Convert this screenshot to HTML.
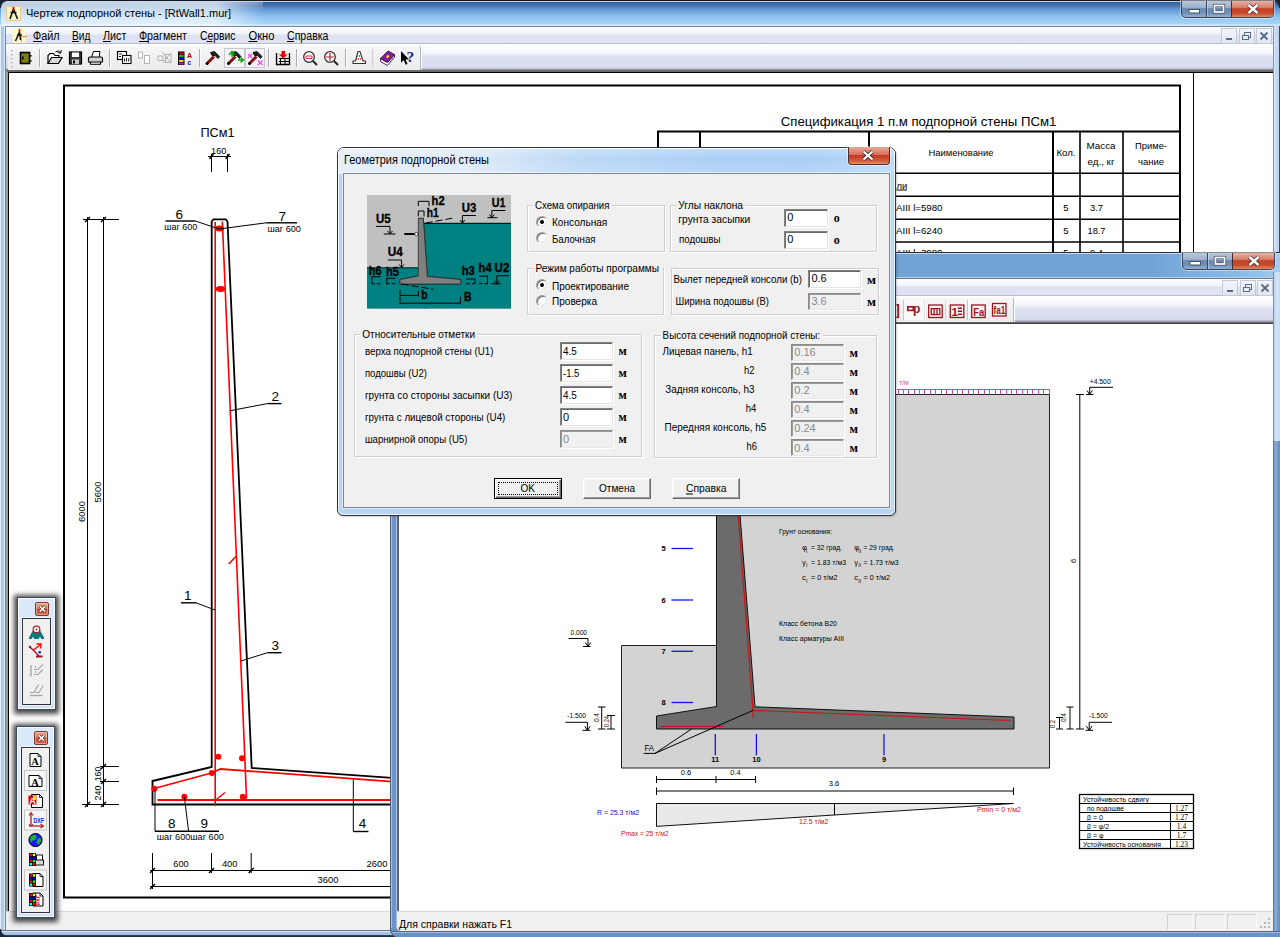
<!DOCTYPE html>
<html lang="ru"><head><meta charset="utf-8"><title>Чертеж подпорной стены</title><style>
html,body{margin:0;padding:0;background:#fff;}
body{width:1280px;height:937px;overflow:hidden;position:relative;font-family:"Liberation Sans",sans-serif;font-size:12px;color:#000;}
#root{position:absolute;left:0;top:0;width:1280px;height:937px;overflow:hidden;}
#root div{position:absolute;box-sizing:border-box;}
svg.L{position:absolute;left:0;top:0;overflow:hidden;}
svg text{font-family:"Liberation Sans",sans-serif;white-space:pre;}
</style></head><body><div id="root">
<div style="left:0px;top:0px;width:1280px;height:937px;background:#b4cfee;"></div>
<div style="left:0px;top:0px;width:1280px;height:27px;background:linear-gradient(to bottom,#15181f 0,#15181f 1px,#c5d6ee 1px,#c5d6ee 2px,#2b5a9c 2px,#3b69a6 3px,#4470a8 5.5px,#4a7cba 6.5px,#5e92cf 8.5px,#66a0db 10.5px,#7ab0e4 13.5px,#8cc0ef 16.5px,#9ccdf5 20.5px,#a4d3f8 23.5px,#c5e5fb 24px,#c5e5fb 26px,#6b7680 26px);"></div>
<div style="left:1px;top:2px;width:262px;height:24px;background:linear-gradient(to right,rgba(255,255,255,.62) 0,rgba(255,255,255,.66) 215px,rgba(255,255,255,0) 262px);"></div>
<div style="left:1px;top:2px;width:262px;height:8px;background:linear-gradient(to bottom,rgba(225,235,248,.35),rgba(255,255,255,0));"></div>
<div style="left:0px;top:26px;width:6px;height:911px;background:linear-gradient(to right,#e4eefa 0,#e4eefa 1px,#a9c5e7 1px,#b3ceee 4px,#d3e5f8 4px,#d3e5f8 5px,#80858e 5px);"></div>
<div style="left:1273px;top:26px;width:7px;height:911px;background:linear-gradient(to right,#8e959f 0,#8e959f 1px,#d6e6f8 1px,#c4d9f2 3px,#bdd4f0 6px,#39485c 6px);"></div>
<div style="left:0px;top:930px;width:1280px;height:7px;background:linear-gradient(to bottom,#6f7780 0,#6f7780 1px,#d3e5f8 1px,#d3e5f8 2px,#a9c6e9 2px,#9fbee4 5px,#3b4a5e 5px,#1d2733 7px);"></div>
<div style="left:0px;top:0px;width:8px;height:8px;background:radial-gradient(circle at 8px 8px,rgba(0,0,0,0) 6.5px,#1c2633 7.5px);"></div>
<div style="left:1272px;top:0px;width:8px;height:8px;background:radial-gradient(circle at 0px 8px,rgba(0,0,0,0) 6.5px,#1c2633 7.5px);"></div>
<div style="left:0px;top:929px;width:8px;height:8px;background:radial-gradient(circle at 8px 0px,rgba(0,0,0,0) 6.5px,#1c2633 7.5px);"></div>
<div style="left:6px;top:26px;width:1267px;height:19px;background:linear-gradient(to bottom,#7f868f 0,#7f868f 1px,#fcfdff 1px,#f1f3fb 8px,#dde1f1 9px,#dfe3f3 17px,#b9bcc8 17px,#b9bcc8 18px,#fff 18px);"></div>
<div style="left:6px;top:45px;width:1267px;height:26px;background:linear-gradient(to bottom,#ffffff 0,#f3f5fc 8px,#dde1f1 12px,#d6dbed 23px,#9b9ea8 24px,#9b9ea8 25px,#696969 25px);"></div>
<div style="left:8px;top:46px;width:413px;height:24px;background:linear-gradient(to bottom,#f7f7f9 0,#f0f0f2 50%,#ececef 100%);border-right:1px solid #b4b6c0;border-radius:0 2px 2px 0;box-shadow:1px 0 0 #fff;"></div>
<div style="left:6px;top:71px;width:1267px;height:840px;background:#fff;border-left:2px solid #9b9b9b;border-top:1px solid #696969;"></div>
<div style="left:8px;top:72px;width:1265px;height:839px;background:#fff;border-left:1px solid #000;border-top:1px solid #000;"></div>
<div style="left:6px;top:911px;width:1267px;height:19px;background:#f0f0f0;border-top:1px solid #d9d9d9;"></div>
<div style="left:1181px;top:1px;width:93px;height:17px;border:1px solid #3a4658;border-top:none;border-radius:0 0 5px 5px;background:linear-gradient(to bottom,#b9c8dc 0,#9db1cc 40%,#6c88ad 48%,#7190b8 75%,#8fb0d6 100%);box-shadow:0 0 0 1px rgba(255,255,255,.45);"></div><div style="left:1231px;top:1px;width:42px;height:16px;border-radius:0 0 4px 0;background:linear-gradient(to bottom,#e8b0a4 0,#d7806c 40%,#c2442a 48%,#c8482c 75%,#e08a5a 100%);border-left:1px solid #4a2a28;"></div><div style="left:1206px;top:1px;width:1px;height:16px;background:#3a4658;"></div><div style="left:1207px;top:1px;width:1px;height:16px;background:rgba(255,255,255,.35);"></div>
<svg class="L" width="1280" height="937" viewBox="0 0 1280 937"><rect x="1189" y="9.5" width="10.5" height="3.5" fill="#fff" stroke="#45546a" stroke-width="1"/><rect x="1214.5" y="5.5" width="9" height="6.5" fill="none" stroke="#45546a" stroke-width="3.2"/><rect x="1214.5" y="5.5" width="9" height="6.5" fill="none" stroke="#fff" stroke-width="1.7"/><path d="M1248.5 5 L1257.5 13 M1257.5 5 L1248.5 13" stroke="#4a3030" stroke-width="4.2" fill="none"/><path d="M1248.5 5 L1257.5 13 M1257.5 5 L1248.5 13" stroke="#fff" stroke-width="2.4" fill="none"/><text x="26" y="17" font-size="11.2" fill="#000" textLength="205" lengthAdjust="spacingAndGlyphs">Чертеж подпорной стены - [RtWall1.mur]</text><text x="33" y="39.7" font-size="12" fill="#000" textLength="26.5" lengthAdjust="spacingAndGlyphs">Файл</text><text x="72" y="39.7" font-size="12" fill="#000" textLength="18.3" lengthAdjust="spacingAndGlyphs">Вид</text><text x="103" y="39.7" font-size="12" fill="#000" textLength="23.3" lengthAdjust="spacingAndGlyphs">Лист</text><text x="139" y="39.7" font-size="12" fill="#000" textLength="48" lengthAdjust="spacingAndGlyphs">Фрагмент</text><text x="200" y="39.7" font-size="12" fill="#000" textLength="35.5" lengthAdjust="spacingAndGlyphs">Сервис</text><text x="248.5" y="39.7" font-size="12" fill="#000" textLength="26" lengthAdjust="spacingAndGlyphs">Окно</text><text x="287" y="39.7" font-size="12" fill="#000" textLength="41.5" lengthAdjust="spacingAndGlyphs">Справка</text><line x1="33" y1="41.5" x2="42" y2="41.5" stroke="#000" stroke-width="1"/><line x1="72" y1="41.5" x2="79" y2="41.5" stroke="#000" stroke-width="1"/><line x1="103" y1="41.5" x2="111" y2="41.5" stroke="#000" stroke-width="1"/><line x1="139" y1="41.5" x2="148" y2="41.5" stroke="#000" stroke-width="1"/><line x1="206.5" y1="41.5" x2="212.5" y2="41.5" stroke="#000" stroke-width="1"/><line x1="248.5" y1="41.5" x2="257.5" y2="41.5" stroke="#000" stroke-width="1"/><line x1="287" y1="41.5" x2="294" y2="41.5" stroke="#000" stroke-width="1"/></svg>
<div style="left:1221.0px;top:28px;width:16px;height:16px;border:1px solid #c3c9d6;background:linear-gradient(to bottom,#f2f5fb,#e0e7f3);"></div><div style="left:1238.5px;top:28px;width:16px;height:16px;border:1px solid #c3c9d6;background:linear-gradient(to bottom,#f2f5fb,#e0e7f3);"></div><div style="left:1256.0px;top:28px;width:16px;height:16px;border:1px solid #c3c9d6;background:linear-gradient(to bottom,#f2f5fb,#e0e7f3);"></div>
<svg class="L" width="1280" height="937" viewBox="0 0 1280 937"><line x1="1226" y1="39" x2="1232" y2="39" stroke="#5a6a80" stroke-width="2"/><rect x="1244.5" y="32.5" width="6" height="5" fill="none" stroke="#5a6a80" stroke-width="1"/><rect x="1242.5" y="35.5" width="6" height="4" fill="#e8edf6" stroke="#5a6a80" stroke-width="1"/><path d="M1260.5 32.5 L1267.5 39.5 M1267.5 32.5 L1260.5 39.5" stroke="#5a6a80" stroke-width="1.8"/></svg>
<svg class="L" width="1280" height="937" viewBox="0 0 1280 937"><line x1="1193.5" y1="73" x2="1193.5" y2="911" stroke="#000" stroke-width="1"/><rect x="64" y="85.5" width="1116" height="812" fill="none" stroke="#000" stroke-width="2"/><text x="200.5" y="137" font-size="13.5" fill="#000" textLength="34" lengthAdjust="spacingAndGlyphs">ПСм1</text><text x="211" y="153.5" font-size="9.5" fill="#000" textLength="15.5" lengthAdjust="spacingAndGlyphs">160</text><line x1="208" y1="156.5" x2="231" y2="156.5" stroke="#000" stroke-width="1"/><line x1="211.5" y1="154" x2="211.5" y2="172" stroke="#000" stroke-width="1"/><line x1="227.5" y1="154" x2="227.5" y2="172" stroke="#000" stroke-width="1"/><line x1="209.5" y1="159" x2="213.5" y2="154" stroke="#000" stroke-width="1.3"/><line x1="225.5" y1="159" x2="229.5" y2="154" stroke="#000" stroke-width="1.3"/><line x1="87.5" y1="217" x2="87.5" y2="807" stroke="#000" stroke-width="1"/><line x1="103.5" y1="217" x2="103.5" y2="807" stroke="#000" stroke-width="1"/><line x1="83" y1="219.5" x2="119" y2="219.5" stroke="#000" stroke-width="1"/><line x1="100" y1="766.5" x2="119" y2="766.5" stroke="#000" stroke-width="1"/><line x1="100" y1="781.5" x2="119" y2="781.5" stroke="#000" stroke-width="1"/><line x1="82" y1="804.5" x2="119" y2="804.5" stroke="#000" stroke-width="1"/><line x1="85.0" y1="222.0" x2="90.0" y2="217.0" stroke="#000" stroke-width="1.5"/><line x1="101.0" y1="222.0" x2="106.0" y2="217.0" stroke="#000" stroke-width="1.5"/><line x1="101.0" y1="769.0" x2="106.0" y2="764.0" stroke="#000" stroke-width="1.5"/><line x1="101.0" y1="784.0" x2="106.0" y2="779.0" stroke="#000" stroke-width="1.5"/><line x1="85.0" y1="807.0" x2="90.0" y2="802.0" stroke="#000" stroke-width="1.5"/><line x1="101.0" y1="807.0" x2="106.0" y2="802.0" stroke="#000" stroke-width="1.5"/><text x="85" y="511.5" font-size="9.5" fill="#000" textLength="21" lengthAdjust="spacingAndGlyphs" text-anchor="middle" transform="rotate(-90 85 511.5)">6000</text><text x="101" y="492" font-size="9.5" fill="#000" textLength="21" lengthAdjust="spacingAndGlyphs" text-anchor="middle" transform="rotate(-90 101 492)">5600</text><text x="101" y="774" font-size="9.5" fill="#000" textLength="14.5" lengthAdjust="spacingAndGlyphs" text-anchor="middle" transform="rotate(-90 101 774)">160</text><text x="101" y="793" font-size="9.5" fill="#000" textLength="15" lengthAdjust="spacingAndGlyphs" text-anchor="middle" transform="rotate(-90 101 793)">240</text><polyline points="152.5,781 211.7,767 211.7,221.5 213.5,219.3 225.7,219.3 227.5,221.5 251.7,768 392,777.8" fill="none" stroke="#000" stroke-width="1.8"/><polyline points="152.5,780 152.5,804.5 392,804.5" fill="none" stroke="#000" stroke-width="1.8"/><line x1="215.2" y1="222" x2="215.2" y2="806" stroke="#f00" stroke-width="1.6"/><polyline points="222.3,221.5 222.8,232 246.5,798" fill="none" stroke="#f00" stroke-width="1.6"/><polyline points="154,788.5 211.5,773 220.5,769 392,781.6" fill="none" stroke="#f00" stroke-width="1.8"/><line x1="157.5" y1="800" x2="392" y2="800" stroke="#f00" stroke-width="1.8"/><line x1="215" y1="800.5" x2="225" y2="792.5" stroke="#f00" stroke-width="1.5"/><line x1="246.5" y1="798" x2="240" y2="800" stroke="#f00" stroke-width="1.5"/><line x1="228.7" y1="564" x2="236.4" y2="556" stroke="#f00" stroke-width="1.5"/><ellipse cx="219.5" cy="228.5" rx="4.6" ry="3" fill="#f00"/><ellipse cx="220.5" cy="289" rx="4.8" ry="3" fill="#f00"/><circle cx="218.3" cy="756.7" r="3" fill="#f00"/><circle cx="242" cy="758.3" r="3" fill="#f00"/><circle cx="211.8" cy="773" r="3" fill="#f00"/><circle cx="154.3" cy="788.7" r="3" fill="#f00"/><circle cx="184.4" cy="796.8" r="3" fill="#f00"/><circle cx="242.8" cy="796.8" r="3" fill="#f00"/><text x="175.5" y="218.7" font-size="13.5" fill="#000">6</text><line x1="165.5" y1="221" x2="195.5" y2="221" stroke="#000" stroke-width="1.4"/><line x1="195.5" y1="221" x2="219" y2="229" stroke="#000" stroke-width="1"/><text x="164.3" y="230" font-size="9.5" fill="#000" textLength="33" lengthAdjust="spacingAndGlyphs">шаг 600</text><text x="278.5" y="220.5" font-size="13.5" fill="#000">7</text><line x1="266.3" y1="222.8" x2="297" y2="222.8" stroke="#000" stroke-width="1.4"/><line x1="266.3" y1="222.8" x2="219" y2="229" stroke="#000" stroke-width="1"/><text x="267.4" y="231.7" font-size="9.5" fill="#000" textLength="33.5" lengthAdjust="spacingAndGlyphs">шаг 600</text><text x="271.5" y="401" font-size="13.5" fill="#000">2</text><line x1="267.4" y1="403.6" x2="281.5" y2="403.6" stroke="#000" stroke-width="1.4"/><line x1="267.4" y1="403.6" x2="229.6" y2="410.8" stroke="#000" stroke-width="1"/><text x="271.5" y="650" font-size="13.5" fill="#000">3</text><line x1="267.4" y1="652.7" x2="281.5" y2="652.7" stroke="#000" stroke-width="1.4"/><line x1="267.4" y1="652.7" x2="241" y2="661" stroke="#000" stroke-width="1"/><text x="184" y="599.5" font-size="13.5" fill="#000">1</text><line x1="181" y1="602.8" x2="196" y2="602.8" stroke="#000" stroke-width="1.4"/><line x1="196" y1="602.8" x2="215" y2="610" stroke="#000" stroke-width="1"/><text x="358.7" y="828" font-size="13.5" fill="#000">4</text><line x1="353.3" y1="831.5" x2="368.4" y2="831.5" stroke="#000" stroke-width="1.4"/><line x1="353.3" y1="831.5" x2="353.3" y2="779.5" stroke="#000" stroke-width="1"/><text x="168" y="828" font-size="13.5" fill="#000">8</text><text x="200.5" y="828" font-size="13.5" fill="#000">9</text><line x1="155" y1="831.3" x2="219" y2="831.3" stroke="#000" stroke-width="1.4"/><line x1="155" y1="831.3" x2="155" y2="790" stroke="#000" stroke-width="1"/><line x1="188.6" y1="831.3" x2="184.4" y2="797" stroke="#000" stroke-width="1"/><text x="156.8" y="840.4" font-size="9.5" fill="#000" textLength="67" lengthAdjust="spacingAndGlyphs">шаг 600шаг 600</text><line x1="150" y1="870.5" x2="392" y2="870.5" stroke="#000" stroke-width="1"/><line x1="150" y1="886.5" x2="392" y2="886.5" stroke="#000" stroke-width="1"/><line x1="152.5" y1="853" x2="152.5" y2="889" stroke="#000" stroke-width="1"/><line x1="211.5" y1="853" x2="211.5" y2="873" stroke="#000" stroke-width="1"/><line x1="251.2" y1="853" x2="251.2" y2="873" stroke="#000" stroke-width="1"/><line x1="150.0" y1="873.0" x2="155.0" y2="868.0" stroke="#000" stroke-width="1.5"/><line x1="209.0" y1="873.0" x2="214.0" y2="868.0" stroke="#000" stroke-width="1.5"/><line x1="248.7" y1="873.0" x2="253.7" y2="868.0" stroke="#000" stroke-width="1.5"/><line x1="150.0" y1="889.0" x2="155.0" y2="884.0" stroke="#000" stroke-width="1.5"/><text x="181" y="866.7" font-size="9.5" fill="#000" textLength="15.5" lengthAdjust="spacingAndGlyphs" text-anchor="middle">600</text><text x="229.7" y="866.7" font-size="9.5" fill="#000" textLength="15.5" lengthAdjust="spacingAndGlyphs" text-anchor="middle">400</text><text x="377" y="866.7" font-size="9.5" fill="#000" textLength="21" lengthAdjust="spacingAndGlyphs" text-anchor="middle">2600</text><text x="328" y="883" font-size="9.5" fill="#000" textLength="21" lengthAdjust="spacingAndGlyphs" text-anchor="middle">3600</text><text x="780.8" y="125.8" font-size="13.5" fill="#000" textLength="275.5" lengthAdjust="spacingAndGlyphs">Спецификация 1 п.м подпорной стены ПСм1</text><line x1="657" y1="131.5" x2="1180" y2="131.5" stroke="#000" stroke-width="2"/><line x1="658" y1="131" x2="658" y2="252" stroke="#000" stroke-width="2"/><line x1="700" y1="131" x2="700" y2="252" stroke="#000" stroke-width="2"/><line x1="869" y1="131" x2="869" y2="252" stroke="#000" stroke-width="2"/><line x1="1053" y1="131" x2="1053" y2="252" stroke="#000" stroke-width="2"/><line x1="1080" y1="131" x2="1080" y2="252" stroke="#000" stroke-width="1.6"/><line x1="1123" y1="131" x2="1123" y2="252" stroke="#000" stroke-width="1.6"/><line x1="657" y1="173.2" x2="1180" y2="173.2" stroke="#000" stroke-width="1.6"/><line x1="657" y1="196.2" x2="1180" y2="196.2" stroke="#000" stroke-width="1.6"/><line x1="657" y1="219.2" x2="1180" y2="219.2" stroke="#000" stroke-width="1.6"/><line x1="657" y1="242" x2="1180" y2="242" stroke="#000" stroke-width="1.6"/><text x="961" y="156" font-size="9.5" fill="#000" textLength="65" lengthAdjust="spacingAndGlyphs" text-anchor="middle">Наименование</text><text x="1066" y="156" font-size="9.5" fill="#000" textLength="19" lengthAdjust="spacingAndGlyphs" text-anchor="middle">Кол.</text><text x="1101" y="148.5" font-size="9.5" fill="#000" textLength="29" lengthAdjust="spacingAndGlyphs" text-anchor="middle">Масса</text><text x="1101" y="165" font-size="9.5" fill="#000" textLength="27" lengthAdjust="spacingAndGlyphs" text-anchor="middle">ед., кг</text><text x="1151" y="148.5" font-size="9.5" fill="#000" textLength="32" lengthAdjust="spacingAndGlyphs" text-anchor="middle">Приме-</text><text x="1151" y="165" font-size="9.5" fill="#000" textLength="26" lengthAdjust="spacingAndGlyphs" text-anchor="middle">чание</text><text x="896.5" y="188.5" font-size="9.5" fill="#000">ли</text><line x1="896.5" y1="190" x2="907" y2="190" stroke="#000" stroke-width="1"/><text x="896" y="211" font-size="9.5" fill="#000" textLength="46.5" lengthAdjust="spacingAndGlyphs">AIII l=5980</text><text x="1066" y="211" font-size="9.5" fill="#000" text-anchor="middle">5</text><text x="1090" y="211" font-size="9.5" fill="#000" textLength="13" lengthAdjust="spacingAndGlyphs">3.7</text><text x="896" y="233.5" font-size="9.5" fill="#000" textLength="46.5" lengthAdjust="spacingAndGlyphs">AIII l=6240</text><text x="1066" y="233.5" font-size="9.5" fill="#000" text-anchor="middle">5</text><text x="1087.5" y="233.5" font-size="9.5" fill="#000" textLength="18" lengthAdjust="spacingAndGlyphs">18.7</text><text x="896" y="256" font-size="9.5" fill="#000" textLength="46.5" lengthAdjust="spacingAndGlyphs">AIII l=3980</text><text x="1066" y="256" font-size="9.5" fill="#000" text-anchor="middle">5</text><text x="1090" y="256" font-size="9.5" fill="#000" textLength="13" lengthAdjust="spacingAndGlyphs">9.4</text></svg>
<svg class="L" width="1280" height="937" viewBox="0 0 1280 937"><rect x="11" y="50" width="2" height="2" fill="#b9bdc9"/><rect x="12" y="51" width="1" height="1" fill="#fff"/><rect x="11" y="54" width="2" height="2" fill="#b9bdc9"/><rect x="12" y="55" width="1" height="1" fill="#fff"/><rect x="11" y="58" width="2" height="2" fill="#b9bdc9"/><rect x="12" y="59" width="1" height="1" fill="#fff"/><rect x="11" y="62" width="2" height="2" fill="#b9bdc9"/><rect x="12" y="63" width="1" height="1" fill="#fff"/><rect x="11" y="66" width="2" height="2" fill="#b9bdc9"/><rect x="12" y="67" width="1" height="1" fill="#fff"/><line x1="39.5" y1="49" x2="39.5" y2="67" stroke="#a9adb8" stroke-width="1"/><line x1="40.5" y1="49" x2="40.5" y2="67" stroke="#fff" stroke-width="1"/><line x1="109.5" y1="49" x2="109.5" y2="67" stroke="#a9adb8" stroke-width="1"/><line x1="110.5" y1="49" x2="110.5" y2="67" stroke="#fff" stroke-width="1"/><line x1="199.5" y1="49" x2="199.5" y2="67" stroke="#a9adb8" stroke-width="1"/><line x1="200.5" y1="49" x2="200.5" y2="67" stroke="#fff" stroke-width="1"/><line x1="268.5" y1="49" x2="268.5" y2="67" stroke="#a9adb8" stroke-width="1"/><line x1="269.5" y1="49" x2="269.5" y2="67" stroke="#fff" stroke-width="1"/><line x1="296.5" y1="49" x2="296.5" y2="67" stroke="#a9adb8" stroke-width="1"/><line x1="297.5" y1="49" x2="297.5" y2="67" stroke="#fff" stroke-width="1"/><line x1="345.5" y1="49" x2="345.5" y2="67" stroke="#a9adb8" stroke-width="1"/><line x1="346.5" y1="49" x2="346.5" y2="67" stroke="#fff" stroke-width="1"/><line x1="373" y1="49" x2="373" y2="67" stroke="#a9adb8" stroke-width="1"/><line x1="374" y1="49" x2="374" y2="67" stroke="#fff" stroke-width="1"/><rect x="20.5" y="52.5" width="9" height="11" fill="#7c7c10" stroke="#000" stroke-width="1.6"/><rect x="29" y="55" width="2.5" height="1.6" fill="#000"/><rect x="29" y="60" width="2.5" height="1.6" fill="#000"/><rect x="22" y="56.5" width="1.5" height="3" fill="#000"/><path d="M48 63.5 L48 55.5 L50 53.5 L53.5 53.5 L55 55.5 L59 55.5 L59 57.5" fill="#fff" stroke="#000" stroke-width="1.2"/><path d="M48 63.5 L51.5 57.5 L62 57.5 L58.5 63.5 Z" fill="#d8d8d8" stroke="#000" stroke-width="1.2"/><path d="M55.5 52 Q58.5 49.5 60.5 52.5 M61.3 50 L60.7 53.2 L57.8 52.6" fill="none" stroke="#000" stroke-width="1"/><rect x="69.5" y="52" width="12" height="12" fill="#3a3a3a" stroke="#000" stroke-width="1.2"/><rect x="72" y="52.5" width="7" height="4.5" fill="#fff"/><rect x="72" y="59.5" width="7" height="4.5" fill="#c8c8c8"/><rect x="73" y="60.5" width="2" height="3" fill="#000"/><path d="M91.5 57.5 L93.5 51.5 L100 51.5 L99 57.5 Z" fill="#fff" stroke="#000" stroke-width="1"/><rect x="88.5" y="57" width="14" height="5.5" rx="1.5" fill="#d0d0d0" stroke="#000" stroke-width="1.2"/><rect x="90.5" y="62" width="10" height="2.3" fill="#f4f4f4" stroke="#000" stroke-width="1"/><rect x="117.5" y="51.5" width="9" height="8" fill="#fff" stroke="#000" stroke-width="1.1"/><rect x="122.5" y="55.5" width="8.5" height="8" fill="#fff" stroke="#000" stroke-width="1.1"/><path d="M119 54 L122 54 M119 56.5 L121 56.5 M124.5 61.5 L124.5 58.5 M126.5 61.5 L126.5 58 M128.5 61.5 L129 58" stroke="#000" stroke-width="0.9"/><rect x="138.5" y="52" width="4" height="6" fill="#fff" stroke="#b4b4b4" stroke-width="1"/><rect x="144.5" y="55.5" width="5" height="8" fill="#fff" stroke="#b4b4b4" stroke-width="1"/><rect x="158" y="56" width="5" height="4.5" fill="none" stroke="#b4b4b4" stroke-width="1"/><rect x="165.5" y="54.5" width="5.5" height="8" fill="none" stroke="#b4b4b4" stroke-width="1"/><path d="M162.5 52 L171 63 M171 52.5 L163 63" stroke="#b4b4b4" stroke-width="1"/><rect x="178" y="51.5" width="6.5" height="13.5" fill="#000"/><rect x="179" y="52.5" width="4.5" height="2" fill="#e00000"/><rect x="179" y="55.0" width="4.5" height="2" fill="#00c800"/><rect x="179" y="57.5" width="4.5" height="2" fill="#1414ff"/><rect x="179" y="60.0" width="4.5" height="2" fill="#e0e000"/><rect x="179" y="62.5" width="4.5" height="2" fill="#e000e0"/><text x="187" y="58" font-size="7" fill="#b00000" font-weight="bold">A</text><text x="187.3" y="64.5" font-size="7" fill="#1414c0" font-weight="bold">c</text><path d="M207 63.5 L214 56.5" stroke="#8a1010" stroke-width="3"/><path d="M207 63.5 L214 56.5" stroke="#000" stroke-width="3" stroke-dasharray="0.01 20" stroke-linecap="round"/><path d="M210.5 52.5 L214.5 51.5 L219.5 56.5 L218 58.5 L215 55.5 L212 55.5 Z" fill="#222" stroke="#000" stroke-width="0.8"/><rect x="224.5" y="48.5" width="20" height="19" fill="#f4f4f6" stroke="#c6c8d0" stroke-width="1"/><path d="M228.5 63.5 L235.5 56.5" stroke="#8a1010" stroke-width="3"/><path d="M228.5 63.5 L235.5 56.5" stroke="#000" stroke-width="3" stroke-dasharray="0.01 20" stroke-linecap="round"/><path d="M232.0 52.5 L236.0 51.5 L241.0 56.5 L239.5 58.5 L236.5 55.5 L233.5 55.5 Z" fill="#222" stroke="#000" stroke-width="0.8"/><path d="M229 55 L232 51.5 L235 55 M232 51.5 L232 57 M238 60 L243.5 60 M240.5 57.5 L243.5 60 L240.5 62.5" fill="none" stroke="#10a010" stroke-width="1.5"/><rect x="245.5" y="48.5" width="19" height="19" fill="#f4f4f6" stroke="#c6c8d0" stroke-width="1"/><path d="M249.5 63.5 L256.5 56.5" stroke="#8a1010" stroke-width="3"/><path d="M249.5 63.5 L256.5 56.5" stroke="#000" stroke-width="3" stroke-dasharray="0.01 20" stroke-linecap="round"/><path d="M253.0 52.5 L257.0 51.5 L262.0 56.5 L260.5 58.5 L257.5 55.5 L254.5 55.5 Z" fill="#222" stroke="#000" stroke-width="0.8"/><path d="M248 54 L252 58 M252 54 L248 58 M258 60.5 L262.5 65 M262.5 60.5 L258 65" fill="none" stroke="#f040f0" stroke-width="1.1"/><path d="M276.5 53 L276.5 64.5 L289.5 64.5 L289.5 53" fill="#e4e4e4" stroke="#000" stroke-width="1.3"/><path d="M279 58.5 L289 58.5 M279 61.5 L289 61.5 M280.5 58.5 L280.5 64.5 M285 58.5 L285 64.5" stroke="#000" stroke-width="1"/><path d="M281.5 51 L285 51 L285 54.5 L287.5 54.5 L283.2 58.5 L279 54.5 L281.5 54.5 Z" fill="#e80000"/><circle cx="309" cy="57" r="5.3" fill="#fff" stroke="#333" stroke-width="1.3"/><path d="M313 61 L317 65" stroke="#222" stroke-width="2"/><path d="M306 56 L312 56 L312 58.5 L306 58.5 Z" fill="none" stroke="#c02020" stroke-width="0.9"/><circle cx="330" cy="57" r="5.3" fill="#fff" stroke="#333" stroke-width="1.3"/><path d="M334 61 L338 65" stroke="#222" stroke-width="2"/><path d="M326 57 L334 57 M330 53 L330 61" stroke="#c02020" stroke-width="1.2"/><path d="M358 51.5 L360 51.5 L363 61 L365.5 61 L365.5 63.5 L353 63.5 L353 61 L355.5 61 Z" fill="#fff" stroke="#333" stroke-width="1.1"/><path d="M357 56 L361 56 M356 59 L362.5 59" stroke="#d02020" stroke-width="1.3" stroke-dasharray="1 1"/><path d="M380.5 58.5 L380.5 61.5 L387.5 65.5 L394.5 57 L394.5 54.5 L387.5 62.5 Z" fill="#fff" stroke="#3a0a4a" stroke-width="0.9"/><path d="M380.5 58.5 L388 51 L394.5 54.5 L387.5 62.5 Z" fill="#8a1aa0" stroke="#3a0a4a" stroke-width="0.9"/><path d="M386 56.5 L388 54.8 L389.6 56.3 L387.6 58.2 Z" fill="#f0e000"/><path d="M401 51 L401 62.5 L403.7 60.2 L405.8 64.8 L407.6 64 L405.5 59.5 L409 59.5 Z" fill="#000"/><text x="406.5" y="62" font-size="15.5" fill="#1c1c90" font-weight="bold" style="font-family:'Liberation Serif',serif">?</text><rect x="6.5" y="6.5" width="14" height="14" fill="#fff8c4" stroke="#f4c890" stroke-width="1"/><path d="M13.5 9 L10 19 M13.5 9 L17.5 19 M10.5 12.5 L16.5 12.5" stroke="#111" stroke-width="1.6" fill="none"/><path d="M13.5 7 L13.5 10.5" stroke="#e00000" stroke-width="1.8"/><rect x="12.5" y="28" width="13" height="15" fill="#fffac8"/><path d="M19.5 32 L15.5 41 M19.5 32 L20.5 40 M17 35 L22 35" stroke="#111" stroke-width="1.5" fill="none"/><path d="M19.5 29 L19.5 32.5" stroke="#e00000" stroke-width="1.6"/><path d="M21.5 42 L21.5 36.5 L27 36.5" stroke="#ff8040" stroke-width="1" fill="none"/></svg>
<div style="left:17px;top:597px;width:39px;height:113px;background:linear-gradient(to bottom,#dbeafb,#cfe2f8);border:1px solid #3f4a58;box-shadow:0 1px 5px 3px rgba(0,0,0,.72);"></div><div style="left:18px;top:598px;width:37px;height:111px;border:1px solid rgba(255,255,255,.8);"></div><div style="left:22px;top:618px;width:29px;height:87px;background:#f0f0f0;border:1px solid #333;box-shadow:0 0 0 1px rgba(255,255,255,.6);"></div><div style="left:35px;top:602px;width:14px;height:14px;border:1px solid #7c3a2c;border-radius:2px;background:linear-gradient(to bottom,#e9a38c 0,#dd7a5c 45%,#c9492b 50%,#d86a45 100%);box-shadow:inset 0 0 0 1px rgba(255,255,255,.35);"></div>
<div style="left:16px;top:726px;width:39px;height:192px;background:linear-gradient(to bottom,#dbeafb,#cfe2f8);border:1px solid #3f4a58;box-shadow:0 1px 5px 3px rgba(0,0,0,.72);"></div><div style="left:17px;top:727px;width:37px;height:190px;border:1px solid rgba(255,255,255,.8);"></div><div style="left:21px;top:747px;width:29px;height:166px;background:#f0f0f0;border:1px solid #333;box-shadow:0 0 0 1px rgba(255,255,255,.6);"></div><div style="left:34px;top:731px;width:14px;height:14px;border:1px solid #7c3a2c;border-radius:2px;background:linear-gradient(to bottom,#e9a38c 0,#dd7a5c 45%,#c9492b 50%,#d86a45 100%);box-shadow:inset 0 0 0 1px rgba(255,255,255,.35);"></div>
<svg class="L" width="1280" height="937" viewBox="0 0 1280 937"><path d="M40.0 606.5 L45.0 611.5 M45.0 606.5 L40.0 611.5" stroke="#5a3a34" stroke-width="3" fill="none"/><path d="M40.0 606.5 L45.0 611.5 M45.0 606.5 L40.0 611.5" stroke="#fff" stroke-width="1.6" fill="none"/><path d="M39.0 735.5 L44.0 740.5 M44.0 735.5 L39.0 740.5" stroke="#5a3a34" stroke-width="3" fill="none"/><path d="M39.0 735.5 L44.0 740.5 M44.0 735.5 L39.0 740.5" stroke="#fff" stroke-width="1.6" fill="none"/><path d="M29 637.5 L32.5 631 L40.5 631 L44 637.5 L44 639 L41.3 639 L40 636.5 L38.7 639 L34.3 639 L33 636.5 L31.7 639 L29 639 Z" fill="#0a7a7a"/><circle cx="36.5" cy="629.5" r="3.3" fill="#fff" stroke="#b01818" stroke-width="1.2"/><circle cx="36.5" cy="629.5" r="0.9" fill="#b01818"/><line x1="30" y1="647" x2="39" y2="656" stroke="#a01010" stroke-width="1.2"/><circle cx="30" cy="647" r="1.2" fill="#a01010"/><line x1="36" y1="656.5" x2="42.5" y2="656.5" stroke="#a01010" stroke-width="2"/><line x1="33.5" y1="650" x2="40.5" y2="644.5" stroke="#f00" stroke-width="1.5"/><polyline points="36.5,644 41,644 40.5,648.5" fill="none" stroke="#f00" stroke-width="1.4"/><circle cx="39.7" cy="652.3" r="1.3" fill="#1515ff"/><line x1="31" y1="665" x2="31" y2="676.5" stroke="#a8a8a8" stroke-width="1.4"/><polyline points="34,669.5 38,669.5 43,664.5" fill="none" stroke="#a8a8a8" stroke-width="1.2"/><polyline points="34,674.5 38,674.5 43,669.5" fill="none" stroke="#a8a8a8" stroke-width="1.2"/><line x1="35.5" y1="666" x2="35.5" y2="668" stroke="#a8a8a8" stroke-width="1"/><line x1="35.5" y1="671" x2="35.5" y2="673" stroke="#a8a8a8" stroke-width="1"/><line x1="30" y1="695.5" x2="42.5" y2="695.5" stroke="#a8a8a8" stroke-width="1.4"/><polyline points="30,692.5 34,692.5 38.5,684.5" fill="none" stroke="#a8a8a8" stroke-width="1.2"/><polyline points="35.5,692.5 39,692.5 43,685.5" fill="none" stroke="#a8a8a8" stroke-width="1.2"/><path d="M30.0 753.5 L38.0 753.5 L41.0 756.5 L41.0 766.5 L30.0 766.5 Z" fill="#fff" stroke="#000" stroke-width="1"/><path d="M38.0 753.5 L38.0 756.5 L41.0 756.5" fill="none" stroke="#000" stroke-width="0.8"/><text x="35.0" y="765" font-size="10.5" fill="#000" text-anchor="middle" font-weight="bold" style="font-family:'Liberation Serif',serif">A</text><rect x="24.5" y="770.5" width="22" height="20" fill="#f6f6f6" stroke="#c4c4c4" stroke-width="1"/><path d="M29.0 775.5 L39.0 775.5 L42.0 778.5 L42.0 786.5 L29.0 786.5 Z" fill="#fff" stroke="#000" stroke-width="1"/><path d="M39.0 775.5 L39.0 778.5 L42.0 778.5" fill="none" stroke="#000" stroke-width="0.8"/><text x="35.0" y="785.5" font-size="10.5" fill="#000" text-anchor="middle" font-weight="bold" style="font-family:'Liberation Serif',serif">A</text><path d="M31.5 794.5 L39.5 794.5 L42.5 797.5 L42.5 807.5 L31.5 807.5 Z" fill="#fff" stroke="#000" stroke-width="1"/><path d="M39.5 794.5 L39.5 797.5 L42.5 797.5" fill="none" stroke="#000" stroke-width="0.8"/><rect x="28.5" y="795.5" width="8" height="9" fill="#e00000"/><rect x="33" y="796" width="3" height="4" fill="#e8e800"/><text x="32.5" y="803.5" font-size="9" fill="#fff" text-anchor="middle" font-weight="bold">A</text><rect x="24.5" y="810" width="22" height="20" fill="#f6f6f6" stroke="#c4c4c4" stroke-width="1"/><line x1="31" y1="813" x2="31" y2="826" stroke="#b02020" stroke-width="1.3"/><line x1="29" y1="826" x2="43" y2="826" stroke="#b02020" stroke-width="1.3"/><polyline points="29,815.5 31,812.5 33,815.5" fill="none" stroke="#b02020" stroke-width="1.2"/><polyline points="40.5,824 43.5,826 40.5,828" fill="none" stroke="#b02020" stroke-width="1.2"/><polyline points="29,824 31,826.5 33,824" fill="none" stroke="#b02020" stroke-width="1"/><text x="33.5" y="822.5" font-size="7" fill="#1515ff" textLength="10.5" lengthAdjust="spacingAndGlyphs" font-weight="bold">DXF</text><circle cx="35.5" cy="840" r="6.6" fill="#1a1aff" stroke="#000" stroke-width="1"/><path d="M31 836 L35 834.5 L37 837 L35 840 L32.5 840.5 L31 843 L30 839 Z M37.5 839 L40.5 837.5 L41 841.5 L38.5 845 L36.5 843 Z" fill="#18b030"/><rect x="29" y="853" width="7" height="13" fill="#000"/><rect x="29.7" y="853.7" width="2.4" height="2.4" fill="#f00"/><rect x="32.8" y="853.7" width="2.4" height="2.4" fill="#ff0"/><rect x="29.7" y="856.8000000000001" width="2.4" height="2.4" fill="#00f"/><rect x="32.8" y="856.8000000000001" width="2.4" height="2.4" fill="#00f"/><rect x="29.7" y="859.9000000000001" width="2.4" height="2.4" fill="#f00"/><rect x="32.8" y="859.9000000000001" width="2.4" height="2.4" fill="#0f0"/><rect x="29.7" y="863.0" width="2.4" height="2.4" fill="#0ff"/><rect x="32.8" y="863.0" width="2.4" height="2.4" fill="#f00"/><rect x="36.5" y="855" width="6" height="6" fill="#fff" stroke="#000" stroke-width="0.9"/><rect x="35.5" y="860" width="8" height="5" fill="#d8d8d8" stroke="#000" stroke-width="0.9"/><rect x="24.5" y="870" width="22" height="20" fill="#f6f6f6" stroke="#c4c4c4" stroke-width="1"/><path d="M33.0 873.5 L40.0 873.5 L43.0 876.5 L43.0 886.5 L33.0 886.5 Z" fill="#fff" stroke="#000" stroke-width="1"/><path d="M40.0 873.5 L40.0 876.5 L43.0 876.5" fill="none" stroke="#000" stroke-width="0.8"/><rect x="29" y="873.5" width="7" height="13" fill="#000"/><rect x="29.7" y="874.2" width="2.4" height="2.4" fill="#f00"/><rect x="32.8" y="874.2" width="2.4" height="2.4" fill="#ff0"/><rect x="29.7" y="877.3000000000001" width="2.4" height="2.4" fill="#00f"/><rect x="32.8" y="877.3000000000001" width="2.4" height="2.4" fill="#00f"/><rect x="29.7" y="880.4000000000001" width="2.4" height="2.4" fill="#f00"/><rect x="32.8" y="880.4000000000001" width="2.4" height="2.4" fill="#0f0"/><rect x="29.7" y="883.5" width="2.4" height="2.4" fill="#0ff"/><rect x="32.8" y="883.5" width="2.4" height="2.4" fill="#f00"/><path d="M33.0 893.0 L40.0 893.0 L43.0 896.0 L43.0 906.0 L33.0 906.0 Z" fill="#fff" stroke="#000" stroke-width="1"/><path d="M40.0 893.0 L40.0 896.0 L43.0 896.0" fill="none" stroke="#000" stroke-width="0.8"/><rect x="29" y="893" width="7" height="13" fill="#000"/><rect x="29.7" y="893.7" width="2.4" height="2.4" fill="#f00"/><rect x="32.8" y="893.7" width="2.4" height="2.4" fill="#ff0"/><rect x="29.7" y="896.8000000000001" width="2.4" height="2.4" fill="#00f"/><rect x="32.8" y="896.8000000000001" width="2.4" height="2.4" fill="#00f"/><rect x="29.7" y="899.9000000000001" width="2.4" height="2.4" fill="#f00"/><rect x="32.8" y="899.9000000000001" width="2.4" height="2.4" fill="#0f0"/><rect x="29.7" y="903.0" width="2.4" height="2.4" fill="#0ff"/><rect x="32.8" y="903.0" width="2.4" height="2.4" fill="#f00"/><text x="40.2" y="905" font-size="5.5" fill="#e00000" textLength="10" lengthAdjust="spacingAndGlyphs" font-weight="bold" transform="rotate(-90 40.2 905)">РХГ</text></svg>
<div style="left:390px;top:252px;width:890px;height:685px;background:#6c93c6;border-top-left-radius:7px;border-bottom-left-radius:8px;box-shadow:inset 1px 0 0 #56616f;"></div>
<div style="left:390px;top:252px;width:890px;height:27px;border-top-left-radius:7px;background:linear-gradient(to right,#72a3d5 0,#72a3d5 760px,#7eb0e0 810px,#93bfec 870px,#a9cbee 890px);"></div>
<div style="left:390px;top:252px;width:890px;height:27px;border-top-left-radius:7px;background:linear-gradient(to bottom,#2a2f38 0,#2a2f38 1px,#c8dcf2 1px,#c8dcf2 2px,rgba(255,255,255,0) 2px,rgba(255,255,255,0) 25px,#b5d2f0 25px,#b5d2f0 26px,#5a6a7c 26px);"></div>
<div style="left:390px;top:260px;width:9px;height:668px;background:linear-gradient(to right,#56616f 0,#56616f 1px,#a3c0e3 1px,#a3c0e3 2px,#6e97cb 2px,#6a92c6 6px,#a3bfe2 6px,#a3bfe2 7px,#666b74 7px,#666b74 9px);"></div>
<div style="left:1273px;top:272px;width:7px;height:170px;background:linear-gradient(to right,#7e90aa 0,#7e90aa 1px,#b9d2ef 1px,#d5e5f7 4px,#c5daf3 7px);"></div>
<div style="left:1273px;top:441px;width:7px;height:496px;background:linear-gradient(to right,#6b7890 0,#6b7890 1px,#6d95c9 1px,#8fb2dc 3px,#6a92c6 5px,#6a92c6 7px);"></div>
<div style="left:392px;top:931px;width:888px;height:6px;border-bottom-left-radius:7px;background:linear-gradient(to bottom,#5b6470 0,#5b6470 1px,#9dbbe2 1px,#9dbbe2 2px,#6a92c6 2px,#6a90c4 100%);"></div>
<div style="left:398px;top:278px;width:875px;height:19px;background:linear-gradient(to bottom,#6e7782 0,#6e7782 1px,#fcfdff 1px,#f1f3fb 8px,#dde1f1 9px,#dfe3f3 17px,#b9bcc8 17px,#b9bcc8 18px,#fff 18px);"></div>
<div style="left:398px;top:297px;width:875px;height:26px;background:linear-gradient(to bottom,#ffffff 0,#f3f5fc 8px,#dde1f1 12px,#d6dbed 23px,#9b9ea8 24px,#9b9ea8 25px,#696969 25px);"></div>
<div style="left:399px;top:298px;width:615px;height:24px;background:linear-gradient(to bottom,#f7f7f9 0,#f0f0f2 50%,#ececef 100%);border-right:1px solid #b4b6c0;box-shadow:1px 0 0 #fff;"></div>
<div style="left:398px;top:323px;width:875px;height:588px;background:#fff;border-left:1px solid #5a5a5a;border-top:1px solid #404040;"></div>
<div style="left:397px;top:911px;width:876px;height:20px;background:#f0f0f0;border-top:1px solid #d5d5d5;border-bottom-left-radius:4px;"></div>
<div style="left:1167px;top:914px;width:26px;height:16px;border:1px solid #d0d0d0;border-right-color:#fafafa;border-bottom-color:#fafafa;"></div>
<div style="left:1195px;top:914px;width:30px;height:16px;border:1px solid #d0d0d0;border-right-color:#fafafa;border-bottom-color:#fafafa;"></div>
<div style="left:1227px;top:914px;width:30px;height:16px;border:1px solid #d0d0d0;border-right-color:#fafafa;border-bottom-color:#fafafa;"></div>
<div style="left:1182px;top:253px;width:93px;height:17px;border:1px solid #3a4658;border-top:none;border-radius:0 0 5px 5px;background:linear-gradient(to bottom,#b9c8dc 0,#9db1cc 40%,#6c88ad 48%,#7190b8 75%,#8fb0d6 100%);box-shadow:0 0 0 1px rgba(255,255,255,.45);"></div><div style="left:1232px;top:253px;width:42px;height:16px;border-radius:0 0 4px 0;background:linear-gradient(to bottom,#e8b0a4 0,#d7806c 40%,#c2442a 48%,#c8482c 75%,#e08a5a 100%);border-left:1px solid #4a2a28;"></div><div style="left:1207px;top:253px;width:1px;height:16px;background:#3a4658;"></div><div style="left:1208px;top:253px;width:1px;height:16px;background:rgba(255,255,255,.35);"></div>
<svg class="L" width="1280" height="937" viewBox="0 0 1280 937"><rect x="1190" y="261.5" width="10.5" height="3.5" fill="#fff" stroke="#45546a" stroke-width="1"/><rect x="1215.5" y="257.5" width="9" height="6.5" fill="none" stroke="#45546a" stroke-width="3.2"/><rect x="1215.5" y="257.5" width="9" height="6.5" fill="none" stroke="#fff" stroke-width="1.7"/><path d="M1249.5 257 L1258.5 265 M1258.5 257 L1249.5 265" stroke="#4a3030" stroke-width="4.2" fill="none"/><path d="M1249.5 257 L1258.5 265 M1258.5 257 L1249.5 265" stroke="#fff" stroke-width="2.4" fill="none"/><rect x="1268" y="926" width="2" height="2" fill="#b8b8b8"/><rect x="1264" y="926" width="2" height="2" fill="#b8b8b8"/><rect x="1260" y="926" width="2" height="2" fill="#b8b8b8"/><rect x="1268" y="922" width="2" height="2" fill="#b8b8b8"/><rect x="1264" y="922" width="2" height="2" fill="#b8b8b8"/><rect x="1268" y="918" width="2" height="2" fill="#b8b8b8"/><text x="399" y="927.6" font-size="10.9" fill="#000" textLength="113" lengthAdjust="spacingAndGlyphs">Для справки нажать F1</text></svg>
<div style="left:1222.0px;top:280px;width:16px;height:16px;border:1px solid #c3c9d6;background:linear-gradient(to bottom,#f2f5fb,#e0e7f3);"></div><div style="left:1239.5px;top:280px;width:16px;height:16px;border:1px solid #c3c9d6;background:linear-gradient(to bottom,#f2f5fb,#e0e7f3);"></div><div style="left:1257.0px;top:280px;width:16px;height:16px;border:1px solid #c3c9d6;background:linear-gradient(to bottom,#f2f5fb,#e0e7f3);"></div>
<svg class="L" width="1280" height="937" viewBox="0 0 1280 937" style="clip-path:inset(252px 0 0 399px)"><line x1="1227" y1="291" x2="1233" y2="291" stroke="#5a6a80" stroke-width="2"/><rect x="1245.5" y="284.5" width="6" height="5" fill="none" stroke="#5a6a80" stroke-width="1"/><rect x="1243.5" y="287.5" width="6" height="4" fill="#e8edf6" stroke="#5a6a80" stroke-width="1"/><path d="M1261.5 284.5 L1268.5 291.5 M1268.5 284.5 L1261.5 291.5" stroke="#5a6a80" stroke-width="1.8"/><line x1="896.5" y1="305" x2="899" y2="305" stroke="#9c1420" stroke-width="1.8"/><line x1="898.2" y1="304" x2="898.2" y2="318" stroke="#9c1420" stroke-width="1.8"/><line x1="896.5" y1="317.2" x2="899" y2="317.2" stroke="#9c1420" stroke-width="1.8"/><line x1="903.5" y1="300" x2="903.5" y2="320" stroke="#c4c5cd" stroke-width="1"/><line x1="904.5" y1="300" x2="904.5" y2="320" stroke="#fff" stroke-width="1"/><line x1="924.5" y1="300" x2="924.5" y2="320" stroke="#c4c5cd" stroke-width="1"/><line x1="925.5" y1="300" x2="925.5" y2="320" stroke="#fff" stroke-width="1"/><line x1="946" y1="300" x2="946" y2="320" stroke="#c4c5cd" stroke-width="1"/><line x1="947" y1="300" x2="947" y2="320" stroke="#fff" stroke-width="1"/><line x1="967.5" y1="300" x2="967.5" y2="320" stroke="#c4c5cd" stroke-width="1"/><line x1="968.5" y1="300" x2="968.5" y2="320" stroke="#fff" stroke-width="1"/><rect x="904.5" y="299.5" width="20" height="21" fill="#f8f8fa"/><rect x="907.8" y="306.8" width="5.5" height="3.6" fill="none" stroke="#9c1420" stroke-width="1.6"/><text x="913" y="313.3" font-size="12" fill="#9c1420" font-weight="bold">p</text><rect x="928.7" y="305" width="13.5" height="12.5" fill="#f8f2f2" stroke="#9c1420" stroke-width="1.3"/><path d="M931.3 308.6 L939.8 308.6 M931.3 314.6 L939.8 314.6 M931.3 308 L931.3 315.2 M934.1 308.6 L934.1 314.6 M937 308.6 L937 314.6 M939.8 308 L939.8 315.2" stroke="#9c1420" stroke-width="1.3" fill="none"/><rect x="950.3" y="305" width="13.5" height="12.5" fill="#f8f2f2" stroke="#9c1420" stroke-width="1.3"/><text x="951.6" y="315.7" font-size="11.5" fill="#9c1420" font-weight="bold">1</text><path d="M957.8 308.3 L962 308.3 M957.8 311.3 L962 311.3 M957.8 314.3 L962 314.3" stroke="#9c1420" stroke-width="1.4"/><rect x="971.7" y="305" width="13.5" height="12.5" fill="#f8f2f2" stroke="#9c1420" stroke-width="1.3"/><text x="973.2" y="315.6" font-size="11" fill="#9c1420" textLength="11" lengthAdjust="spacingAndGlyphs" font-weight="bold">Fa</text><rect x="992.5" y="303.5" width="13.5" height="12.5" fill="#f8f2f2" stroke="#9c1420" stroke-width="1.3"/><text x="993.6" y="314.2" font-size="10.5" fill="#9c1420" textLength="11.8" lengthAdjust="spacingAndGlyphs" font-weight="bold">fa1</text><polyline points="621.5,645.5 720,645.5 720,394.5 1049.5,394.5 1049.5,768 621.5,768 621.5,645.5" fill="#d3d3d3" stroke="#222" stroke-width="1"/><polyline points="716.5,380 716.5,706.5 656.5,716 656.5,729 1014,729 1014,717 755,706.8 729.5,380" fill="#6b6b6b" stroke="#111" stroke-width="1"/><polyline points="728,380 753,710.4 753,717.5" fill="none" stroke="#cc1414" stroke-width="1.2"/><polyline points="753,710.4 1010,720.5" fill="none" stroke="#cc1414" stroke-width="1.2"/><line x1="660.3" y1="726.5" x2="723.3" y2="726.5" stroke="#cc1414" stroke-width="1.2"/><line x1="897" y1="389.5" x2="1049.5" y2="389.5" stroke="#c848ac" stroke-width="1"/><line x1="898.5" y1="389.5" x2="898.5" y2="394.5" stroke="#c848ac" stroke-width="1"/><line x1="903.5" y1="389.5" x2="903.5" y2="394.5" stroke="#c848ac" stroke-width="1"/><line x1="908.5" y1="389.5" x2="908.5" y2="394.5" stroke="#c848ac" stroke-width="1"/><line x1="914.5" y1="389.5" x2="914.5" y2="394.5" stroke="#c848ac" stroke-width="1"/><line x1="919.5" y1="389.5" x2="919.5" y2="394.5" stroke="#c848ac" stroke-width="1"/><line x1="924.5" y1="389.5" x2="924.5" y2="394.5" stroke="#c848ac" stroke-width="1"/><line x1="930.5" y1="389.5" x2="930.5" y2="394.5" stroke="#c848ac" stroke-width="1"/><line x1="935.5" y1="389.5" x2="935.5" y2="394.5" stroke="#c848ac" stroke-width="1"/><line x1="941.5" y1="389.5" x2="941.5" y2="394.5" stroke="#c848ac" stroke-width="1"/><line x1="946.5" y1="389.5" x2="946.5" y2="394.5" stroke="#c848ac" stroke-width="1"/><line x1="952.5" y1="389.5" x2="952.5" y2="394.5" stroke="#c848ac" stroke-width="1"/><line x1="957.5" y1="389.5" x2="957.5" y2="394.5" stroke="#c848ac" stroke-width="1"/><line x1="962.5" y1="389.5" x2="962.5" y2="394.5" stroke="#c848ac" stroke-width="1"/><line x1="968.5" y1="389.5" x2="968.5" y2="394.5" stroke="#c848ac" stroke-width="1"/><line x1="973.5" y1="389.5" x2="973.5" y2="394.5" stroke="#c848ac" stroke-width="1"/><line x1="978.5" y1="389.5" x2="978.5" y2="394.5" stroke="#c848ac" stroke-width="1"/><line x1="984.5" y1="389.5" x2="984.5" y2="394.5" stroke="#c848ac" stroke-width="1"/><line x1="989.5" y1="389.5" x2="989.5" y2="394.5" stroke="#c848ac" stroke-width="1"/><line x1="995.5" y1="389.5" x2="995.5" y2="394.5" stroke="#c848ac" stroke-width="1"/><line x1="1000.5" y1="389.5" x2="1000.5" y2="394.5" stroke="#c848ac" stroke-width="1"/><line x1="1006.5" y1="389.5" x2="1006.5" y2="394.5" stroke="#c848ac" stroke-width="1"/><line x1="1011.5" y1="389.5" x2="1011.5" y2="394.5" stroke="#c848ac" stroke-width="1"/><line x1="1016.5" y1="389.5" x2="1016.5" y2="394.5" stroke="#c848ac" stroke-width="1"/><line x1="1022.5" y1="389.5" x2="1022.5" y2="394.5" stroke="#c848ac" stroke-width="1"/><line x1="1027.5" y1="389.5" x2="1027.5" y2="394.5" stroke="#c848ac" stroke-width="1"/><line x1="1032.5" y1="389.5" x2="1032.5" y2="394.5" stroke="#c848ac" stroke-width="1"/><line x1="1038.5" y1="389.5" x2="1038.5" y2="394.5" stroke="#c848ac" stroke-width="1"/><line x1="1043.5" y1="389.5" x2="1043.5" y2="394.5" stroke="#c848ac" stroke-width="1"/><line x1="1049.5" y1="389.5" x2="1049.5" y2="394.5" stroke="#c848ac" stroke-width="1"/><text x="899" y="384.5" font-size="6.5" fill="#cc58b4" textLength="9.8" lengthAdjust="spacingAndGlyphs">т/м</text><line x1="671.5" y1="548.5" x2="693" y2="548.5" stroke="#1414e6" stroke-width="1.3"/><text x="661.5" y="551.0" font-size="7.5" fill="#000" font-weight="bold">5</text><line x1="671.5" y1="600" x2="693" y2="600" stroke="#1414e6" stroke-width="1.3"/><text x="661.5" y="602.5" font-size="7.5" fill="#000" font-weight="bold">6</text><line x1="671.5" y1="651.3" x2="693" y2="651.3" stroke="#1414e6" stroke-width="1.3"/><text x="661.5" y="653.8" font-size="7.5" fill="#000" font-weight="bold">7</text><line x1="671.5" y1="702.5" x2="693" y2="702.5" stroke="#1414e6" stroke-width="1.3"/><text x="661.5" y="705.0" font-size="7.5" fill="#000" font-weight="bold">8</text><line x1="715.3" y1="734" x2="715.3" y2="755.3" stroke="#1414e6" stroke-width="1.3"/><text x="715.3" y="762" font-size="7.5" fill="#000" text-anchor="middle" font-weight="bold">11</text><line x1="756.4" y1="734" x2="756.4" y2="755.3" stroke="#1414e6" stroke-width="1.3"/><text x="756.4" y="762" font-size="7.5" fill="#000" text-anchor="middle" font-weight="bold">10</text><line x1="884" y1="734" x2="884" y2="755.3" stroke="#1414e6" stroke-width="1.3"/><text x="884" y="762" font-size="7.5" fill="#000" text-anchor="middle" font-weight="bold">9</text><text x="644.5" y="750.7" font-size="8.5" fill="#000" textLength="9.5" lengthAdjust="spacingAndGlyphs">FA</text><line x1="643.6" y1="753.4" x2="655" y2="753.4" stroke="#000" stroke-width="1"/><line x1="655" y1="753.4" x2="691.6" y2="729" stroke="#000" stroke-width="1"/><line x1="655" y1="753.4" x2="753" y2="710.4" stroke="#000" stroke-width="1"/><line x1="656.5" y1="779.5" x2="755.6" y2="779.5" stroke="#000" stroke-width="1"/><line x1="656.5" y1="776" x2="656.5" y2="783" stroke="#000" stroke-width="1"/><line x1="716" y1="776" x2="716" y2="783" stroke="#000" stroke-width="1"/><line x1="755.6" y1="776" x2="755.6" y2="783" stroke="#000" stroke-width="1"/><text x="686" y="775" font-size="7.5" fill="#000" text-anchor="middle">0.6</text><text x="735.5" y="775" font-size="7.5" fill="#000" text-anchor="middle">0.4</text><line x1="656.5" y1="791" x2="1014" y2="791" stroke="#000" stroke-width="1"/><line x1="656.5" y1="787.5" x2="656.5" y2="795" stroke="#000" stroke-width="1"/><line x1="1013.5" y1="787.5" x2="1013.5" y2="795" stroke="#000" stroke-width="1"/><text x="834" y="786.3" font-size="7.5" fill="#000" text-anchor="middle">3.6</text><polyline points="656.5,803.5 1013.5,803.5 656.5,826.4 656.5,803.5" fill="#e9e9e9" stroke="#111" stroke-width="1"/><line x1="834.5" y1="803.5" x2="834.5" y2="815" stroke="#000" stroke-width="1"/><text x="597" y="814.5" font-size="8" fill="#1010d0" textLength="42" lengthAdjust="spacingAndGlyphs">R = 25.3 т/м2</text><text x="621" y="835.6" font-size="8" fill="#d01010" textLength="47.5" lengthAdjust="spacingAndGlyphs">Pmax = 25 т/м2</text><text x="799" y="824" font-size="8" fill="#d01010" textLength="29.5" lengthAdjust="spacingAndGlyphs">12.5 т/м2</text><text x="977" y="812" font-size="8" fill="#d01010" textLength="44" lengthAdjust="spacingAndGlyphs">Pmin = 0 т/м2</text><text x="570.5" y="634.6" font-size="7.5" fill="#000" textLength="16.5" lengthAdjust="spacingAndGlyphs">0.000</text><polyline points="568.6,638.5 588,638.5 588,646.5" fill="none" stroke="#000" stroke-width="1"/><line x1="583" y1="646.5" x2="590.5" y2="646.5" stroke="#000" stroke-width="1"/><polyline points="585.3,642.5 588,646.5 590.7,642.5" fill="none" stroke="#000" stroke-width="1"/><text x="567.3" y="717.9" font-size="7.5" fill="#000" textLength="18.7" lengthAdjust="spacingAndGlyphs">-1.500</text><polyline points="565.4,722.3 587.4,722.3 587.4,730.3" fill="none" stroke="#000" stroke-width="1"/><line x1="582.5" y1="730.3" x2="590.5" y2="730.3" stroke="#000" stroke-width="1"/><polyline points="584.7,726.3 587.4,730.3 590.1,726.3" fill="none" stroke="#000" stroke-width="1"/><line x1="601.7" y1="707" x2="601.7" y2="729" stroke="#000" stroke-width="1"/><line x1="598" y1="707" x2="605.5" y2="707" stroke="#000" stroke-width="1"/><line x1="598" y1="729" x2="605.5" y2="729" stroke="#000" stroke-width="1"/><line x1="611" y1="715.5" x2="611" y2="729" stroke="#000" stroke-width="1"/><line x1="607" y1="715.5" x2="615" y2="715.5" stroke="#000" stroke-width="1"/><line x1="607" y1="729" x2="615" y2="729" stroke="#000" stroke-width="1"/><text x="598.5" y="717.5" font-size="7" fill="#000" textLength="8.5" lengthAdjust="spacingAndGlyphs" text-anchor="middle" transform="rotate(-90 598.5 717.5)">0.4</text><text x="609" y="721.5" font-size="7" fill="#000" textLength="11" lengthAdjust="spacingAndGlyphs" text-anchor="middle" transform="rotate(-90 609 721.5)">0.24</text><line x1="1079.8" y1="394" x2="1079.8" y2="729" stroke="#000" stroke-width="1"/><line x1="1076" y1="394.5" x2="1084" y2="394.5" stroke="#000" stroke-width="1"/><line x1="1076" y1="729" x2="1084" y2="729" stroke="#000" stroke-width="1"/><text x="1075.5" y="561" font-size="7.5" fill="#000" text-anchor="middle" transform="rotate(-90 1075.5 561)">6</text><text x="1089.7" y="383.7" font-size="7.5" fill="#000" textLength="21" lengthAdjust="spacingAndGlyphs">+4.500</text><polyline points="1113,387.3 1089.7,387.3 1089.7,394.5" fill="none" stroke="#000" stroke-width="1"/><line x1="1086" y1="394.5" x2="1093.5" y2="394.5" stroke="#000" stroke-width="1"/><polyline points="1087,390.5 1089.7,394.5 1092.4,390.5" fill="none" stroke="#000" stroke-width="1"/><text x="1088.7" y="718" font-size="7.5" fill="#000" textLength="19" lengthAdjust="spacingAndGlyphs">-1.500</text><polyline points="1112,722.3 1089.2,722.3 1089.2,730.3" fill="none" stroke="#000" stroke-width="1"/><line x1="1085.5" y1="730.3" x2="1093" y2="730.3" stroke="#000" stroke-width="1"/><polyline points="1086.3,726 1089.2,730.3 1092.1,726" fill="none" stroke="#000" stroke-width="1"/><line x1="1070" y1="707" x2="1070" y2="729" stroke="#000" stroke-width="1"/><line x1="1066.5" y1="707" x2="1073.5" y2="707" stroke="#000" stroke-width="1"/><line x1="1066.5" y1="729" x2="1073.5" y2="729" stroke="#000" stroke-width="1"/><line x1="1059.5" y1="717.5" x2="1059.5" y2="729" stroke="#000" stroke-width="1"/><line x1="1056" y1="717.5" x2="1063" y2="717.5" stroke="#000" stroke-width="1"/><line x1="1056" y1="729" x2="1063" y2="729" stroke="#000" stroke-width="1"/><text x="1066" y="717.5" font-size="7" fill="#000" textLength="8.5" lengthAdjust="spacingAndGlyphs" text-anchor="middle" transform="rotate(-90 1066 717.5)">0.4</text><text x="1055" y="724" font-size="7" fill="#000" textLength="8" lengthAdjust="spacingAndGlyphs" text-anchor="middle" transform="rotate(-90 1055 724)">0.2</text><text x="779" y="534.4" font-size="7.5" fill="#000" textLength="53" lengthAdjust="spacingAndGlyphs">Грунт основания:</text><text x="802" y="550" font-size="7.5" fill="#000">φ</text><text x="806" y="552.5" font-size="5" fill="#000">I</text><text x="811" y="550" font-size="7.5" fill="#000" textLength="31" lengthAdjust="spacingAndGlyphs">= 32 град.</text><text x="854.3" y="550" font-size="7.5" fill="#000">φ</text><text x="858.3" y="552.5" font-size="5" fill="#000">II</text><text x="863.5" y="550" font-size="7.5" fill="#000" textLength="31" lengthAdjust="spacingAndGlyphs">= 29 град.</text><text x="802" y="564.6" font-size="7.5" fill="#000">γ</text><text x="806" y="567" font-size="5" fill="#000">I</text><text x="811" y="564.6" font-size="7.5" fill="#000" textLength="35" lengthAdjust="spacingAndGlyphs">= 1.83 т/м3</text><text x="854.3" y="564.6" font-size="7.5" fill="#000">γ</text><text x="858.3" y="567" font-size="5" fill="#000">II</text><text x="863.5" y="564.6" font-size="7.5" fill="#000" textLength="35" lengthAdjust="spacingAndGlyphs">= 1.73 т/м3</text><text x="802" y="580.4" font-size="7.5" fill="#000">c</text><text x="806" y="583" font-size="5" fill="#000">I</text><text x="811" y="580.4" font-size="7.5" fill="#000" textLength="26.5" lengthAdjust="spacingAndGlyphs">= 0 т/м2</text><text x="854.3" y="580.4" font-size="7.5" fill="#000">c</text><text x="858.3" y="583" font-size="5" fill="#000">II</text><text x="863.5" y="580.4" font-size="7.5" fill="#000" textLength="26.5" lengthAdjust="spacingAndGlyphs">= 0 т/м2</text><text x="779" y="626.3" font-size="7.5" fill="#000" textLength="58" lengthAdjust="spacingAndGlyphs">Класс бетона B20</text><text x="779" y="641" font-size="7.5" fill="#000" textLength="65" lengthAdjust="spacingAndGlyphs">Класс арматуры AIII</text><rect x="1079.5" y="794.5" width="114" height="54" fill="#fff" stroke="#000" stroke-width="1.3"/><line x1="1079.5" y1="803.5" x2="1193.5" y2="803.5" stroke="#000" stroke-width="1"/><line x1="1079.5" y1="812.5" x2="1193.5" y2="812.5" stroke="#000" stroke-width="1"/><line x1="1079.5" y1="821.5" x2="1193.5" y2="821.5" stroke="#000" stroke-width="1"/><line x1="1079.5" y1="830.5" x2="1193.5" y2="830.5" stroke="#000" stroke-width="1"/><line x1="1079.5" y1="839.5" x2="1193.5" y2="839.5" stroke="#000" stroke-width="1"/><line x1="1170.5" y1="803.5" x2="1170.5" y2="848.5" stroke="#000" stroke-width="1"/><text x="1083" y="802" font-size="7.5" fill="#000" textLength="66" lengthAdjust="spacingAndGlyphs">Устойчивость сдвигу</text><text x="1087" y="811" font-size="7.5" fill="#000" textLength="37" lengthAdjust="spacingAndGlyphs">по подошве</text><text x="1181.5" y="811" font-size="7.5" fill="#000" text-anchor="middle" style="font-family:'Liberation Serif',serif">1.27</text><text x="1087" y="820" font-size="7.5" fill="#000" textLength="16" lengthAdjust="spacingAndGlyphs">β = 0</text><text x="1181.5" y="820" font-size="7.5" fill="#000" text-anchor="middle" style="font-family:'Liberation Serif',serif">1.27</text><text x="1087" y="829" font-size="7.5" fill="#000" textLength="22" lengthAdjust="spacingAndGlyphs">β = φ/2</text><text x="1181.5" y="829" font-size="7.5" fill="#000" text-anchor="middle" style="font-family:'Liberation Serif',serif">1.4</text><text x="1087" y="838" font-size="7.5" fill="#000" textLength="16.5" lengthAdjust="spacingAndGlyphs">β = φ</text><text x="1181.5" y="838" font-size="7.5" fill="#000" text-anchor="middle" style="font-family:'Liberation Serif',serif">1.7</text><text x="1083" y="847" font-size="7.5" fill="#000" textLength="78" lengthAdjust="spacingAndGlyphs">Устойчивость основания</text><text x="1181.5" y="847" font-size="7.5" fill="#000" text-anchor="middle" style="font-family:'Liberation Serif',serif">1.23</text></svg>
<div style="left:337px;top:147px;width:559px;height:369px;border-radius:7px 7px 6px 6px;background:#b9d5f3;border:1px solid #2a3442;box-shadow:1px 1px 2px rgba(0,0,0,.18);"></div>
<div style="left:338px;top:148px;width:557px;height:26px;border-radius:6px 6px 0 0;background:linear-gradient(to right,#e4eef9 0,#dfebf8 130px,#bcd9f6 240px,#abd0f6 380px,#a9cff6 470px,#bbdaf9 559px);"></div>
<div style="left:338px;top:148px;width:557px;height:26px;border-radius:6px 6px 0 0;background:linear-gradient(to bottom,rgba(255,255,255,.85) 0,rgba(255,255,255,.85) 1px,rgba(255,255,255,.25) 1px,rgba(255,255,255,0) 10px,rgba(255,255,255,.15) 26px);"></div>
<div style="left:338px;top:148px;width:557px;height:367px;border-radius:6px;border:1px solid rgba(255,255,255,.75);"></div>
<div style="left:343px;top:173px;width:547px;height:335px;background:#f0f0f0;border:1px solid #7d8896;box-shadow:0 0 0 1px rgba(255,255,255,.55);"></div>
<div style="left:848px;top:147px;width:42px;height:18px;border:1px solid #5a2a24;border-top:none;border-radius:0 0 4px 4px;background:linear-gradient(to bottom,#e8aa9c 0,#d7705c 45%,#c23a22 50%,#d5623f 85%,#e6966c 100%);box-shadow:0 0 0 1px rgba(255,255,255,.5);"></div>
<svg class="L" width="1280" height="937" viewBox="0 0 1280 937"><path d="M863.5 151.5 L872.5 159.5 M872.5 151.5 L863.5 159.5" stroke="#4a3030" stroke-width="4" fill="none"/><path d="M863.5 151.5 L872.5 159.5 M872.5 151.5 L863.5 159.5" stroke="#fff" stroke-width="2.2" fill="none"/><text x="344" y="164" font-size="12" fill="#000" textLength="145" lengthAdjust="spacingAndGlyphs">Геометрия подпорной стены</text></svg>
<div style="left:527px;top:205px;width:138px;height:46.5px;border:1px solid #cfcfcf;box-shadow:inset 1px 1px 0 #fff,1px 1px 0 #fff;"></div><div style="left:533px;top:199px;width:79px;height:12px;background:#f0f0f0;"></div>
<div style="left:670px;top:205px;width:206.5px;height:46.5px;border:1px solid #cfcfcf;box-shadow:inset 1px 1px 0 #fff,1px 1px 0 #fff;"></div><div style="left:676.3px;top:199px;width:69px;height:12px;background:#f0f0f0;"></div>
<div style="left:527px;top:267.5px;width:137px;height:47px;border:1px solid #cfcfcf;box-shadow:inset 1px 1px 0 #fff,1px 1px 0 #fff;"></div><div style="left:533.5px;top:261.5px;width:128px;height:12px;background:#f0f0f0;"></div>
<div style="left:670.5px;top:267.5px;width:208.5px;height:47px;border:1px solid #cfcfcf;box-shadow:inset 1px 1px 0 #fff,1px 1px 0 #fff;"></div>
<div style="left:354px;top:334px;width:288px;height:123px;border:1px solid #cfcfcf;box-shadow:inset 1px 1px 0 #fff,1px 1px 0 #fff;"></div><div style="left:360.3px;top:328px;width:117px;height:12px;background:#f0f0f0;"></div>
<div style="left:654px;top:335px;width:222.5px;height:123px;border:1px solid #cfcfcf;box-shadow:inset 1px 1px 0 #fff,1px 1px 0 #fff;"></div><div style="left:660.6px;top:329px;width:162px;height:12px;background:#f0f0f0;"></div>
<div style="left:784px;top:209px;width:44px;height:18px;background:#fff;border:1px solid #828282;border-right-color:#e3e3e3;border-bottom-color:#e3e3e3;box-shadow:inset 1px 1px 0 #6a6a6a,1px 1px 0 #fff;"></div><div style="left:784px;top:231px;width:44px;height:18px;background:#fff;border:1px solid #828282;border-right-color:#e3e3e3;border-bottom-color:#e3e3e3;box-shadow:inset 1px 1px 0 #6a6a6a,1px 1px 0 #fff;"></div>
<div style="left:808px;top:270px;width:53px;height:18px;background:#fff;border:1px solid #828282;border-right-color:#e3e3e3;border-bottom-color:#e3e3e3;box-shadow:inset 1px 1px 0 #6a6a6a,1px 1px 0 #fff;"></div><div style="left:808px;top:293px;width:53px;height:17px;background:#f0f0f0;border:1px solid #8a8a8a;border-right-color:#e8e8e8;border-bottom-color:#e8e8e8;box-shadow:inset 1px 1px 0 #9a9a9a,1px 1px 0 #fff;"></div>
<div style="left:560px;top:342px;width:53px;height:18px;background:#fff;border:1px solid #828282;border-right-color:#e3e3e3;border-bottom-color:#e3e3e3;box-shadow:inset 1px 1px 0 #6a6a6a,1px 1px 0 #fff;"></div>
<div style="left:560px;top:364px;width:53px;height:18px;background:#fff;border:1px solid #828282;border-right-color:#e3e3e3;border-bottom-color:#e3e3e3;box-shadow:inset 1px 1px 0 #6a6a6a,1px 1px 0 #fff;"></div>
<div style="left:560px;top:386px;width:53px;height:18px;background:#fff;border:1px solid #828282;border-right-color:#e3e3e3;border-bottom-color:#e3e3e3;box-shadow:inset 1px 1px 0 #6a6a6a,1px 1px 0 #fff;"></div>
<div style="left:560px;top:408px;width:53px;height:18px;background:#fff;border:1px solid #828282;border-right-color:#e3e3e3;border-bottom-color:#e3e3e3;box-shadow:inset 1px 1px 0 #6a6a6a,1px 1px 0 #fff;"></div>
<div style="left:560px;top:430px;width:53px;height:18px;background:#f0f0f0;border:1px solid #8a8a8a;border-right-color:#e8e8e8;border-bottom-color:#e8e8e8;box-shadow:inset 1px 1px 0 #9a9a9a,1px 1px 0 #fff;"></div>
<div style="left:791px;top:344px;width:53px;height:17px;background:#f0f0f0;border:1px solid #8a8a8a;border-right-color:#e8e8e8;border-bottom-color:#e8e8e8;box-shadow:inset 1px 1px 0 #9a9a9a,1px 1px 0 #fff;"></div>
<div style="left:791px;top:363px;width:53px;height:17px;background:#f0f0f0;border:1px solid #8a8a8a;border-right-color:#e8e8e8;border-bottom-color:#e8e8e8;box-shadow:inset 1px 1px 0 #9a9a9a,1px 1px 0 #fff;"></div>
<div style="left:791px;top:382px;width:53px;height:17px;background:#f0f0f0;border:1px solid #8a8a8a;border-right-color:#e8e8e8;border-bottom-color:#e8e8e8;box-shadow:inset 1px 1px 0 #9a9a9a,1px 1px 0 #fff;"></div>
<div style="left:791px;top:401px;width:53px;height:17px;background:#f0f0f0;border:1px solid #8a8a8a;border-right-color:#e8e8e8;border-bottom-color:#e8e8e8;box-shadow:inset 1px 1px 0 #9a9a9a,1px 1px 0 #fff;"></div>
<div style="left:791px;top:420px;width:53px;height:17px;background:#f0f0f0;border:1px solid #8a8a8a;border-right-color:#e8e8e8;border-bottom-color:#e8e8e8;box-shadow:inset 1px 1px 0 #9a9a9a,1px 1px 0 #fff;"></div>
<div style="left:791px;top:439px;width:53px;height:17px;background:#f0f0f0;border:1px solid #8a8a8a;border-right-color:#e8e8e8;border-bottom-color:#e8e8e8;box-shadow:inset 1px 1px 0 #9a9a9a,1px 1px 0 #fff;"></div>
<div style="left:494px;top:478px;width:67.5px;height:20.5px;background:#f0f0f0;border:1px solid #000;box-shadow:inset 1px 1px 0 #fff,inset -1px -1px 0 #696969,inset -2px -2px 0 #a0a0a0;"></div><div style="left:498px;top:482px;width:59.5px;height:12.5px;border:1px dotted #000;"></div><div style="left:583px;top:478px;width:68px;height:20.5px;background:#f0f0f0;border:1px solid #fff;border-right-color:#696969;border-bottom-color:#696969;box-shadow:inset -1px -1px 0 #a0a0a0,inset 1px 1px 0 #f8f8f8;"></div><div style="left:672px;top:478px;width:68px;height:20.5px;background:#f0f0f0;border:1px solid #fff;border-right-color:#696969;border-bottom-color:#696969;box-shadow:inset -1px -1px 0 #a0a0a0,inset 1px 1px 0 #f8f8f8;"></div>
<div style="left:535.5px;top:216px;width:12px;height:12px;border-radius:6px;background:#fff;border:1px solid #9c9c9c;border-right-color:#f4f4f4;border-bottom-color:#f4f4f4;box-shadow:inset 1px 1px 0 #6e6e6e,inset -1px -1px 0 #e0e0e0;"></div><div style="left:539.5px;top:220px;width:4px;height:4px;border-radius:2px;background:#000;"></div><div style="left:535.5px;top:232.3px;width:12px;height:12px;border-radius:6px;background:#fff;border:1px solid #9c9c9c;border-right-color:#f4f4f4;border-bottom-color:#f4f4f4;box-shadow:inset 1px 1px 0 #6e6e6e,inset -1px -1px 0 #e0e0e0;"></div><div style="left:535.5px;top:279px;width:12px;height:12px;border-radius:6px;background:#fff;border:1px solid #9c9c9c;border-right-color:#f4f4f4;border-bottom-color:#f4f4f4;box-shadow:inset 1px 1px 0 #6e6e6e,inset -1px -1px 0 #e0e0e0;"></div><div style="left:539.5px;top:283px;width:4px;height:4px;border-radius:2px;background:#000;"></div><div style="left:535.5px;top:295.3px;width:12px;height:12px;border-radius:6px;background:#fff;border:1px solid #9c9c9c;border-right-color:#f4f4f4;border-bottom-color:#f4f4f4;box-shadow:inset 1px 1px 0 #6e6e6e,inset -1px -1px 0 #e0e0e0;"></div>
<div style="left:367px;top:195px;width:144px;height:113.5px;background:#c0c0c0;"></div>
<svg class="L" width="1280" height="937" viewBox="0 0 1280 937"><rect x="423" y="223" width="88" height="85.5" fill="#008080"/><rect x="367" y="267.5" width="60" height="41" fill="#008080"/><line x1="423" y1="223.3" x2="511" y2="223.3" stroke="#000" stroke-width="1"/><line x1="367" y1="267.8" x2="418" y2="267.8" stroke="#000" stroke-width="0.8"/><polyline points="418.3,218.3 423.3,218.3 427.3,276.5 460.7,279.5 460.7,284 400,284 400,279.5 418.3,276" fill="#808080" stroke="#1a1a1a" stroke-width="0.8" stroke-linejoin="miter"/><polygon points="418.3,218.3 423.3,218.3 427.3,276.5 460.7,279.5 460.7,284 400,284 400,279.5 418.3,276" fill="#808080" stroke="#222" stroke-width="0.7"/><line x1="425.7" y1="223" x2="455.2" y2="217.7" stroke="#000" stroke-width="1" stroke-dasharray="7 3"/><line x1="401.6" y1="284" x2="433.4" y2="289.3" stroke="#000" stroke-width="1" stroke-dasharray="7 3"/><line x1="404.3" y1="234" x2="414.8" y2="234" stroke="#000" stroke-width="2"/><circle cx="416.3" cy="234" r="1.6" fill="#fff" stroke="#000" stroke-width="0.6"/><text x="431.6" y="205.4" font-size="12.5" fill="#000" textLength="13" lengthAdjust="spacingAndGlyphs" font-weight="bold" stroke="#000" stroke-width="0.35">h2</text><text x="426.8" y="217" font-size="12.5" fill="#000" textLength="12" lengthAdjust="spacingAndGlyphs" font-weight="bold" stroke="#000" stroke-width="0.35">h1</text><text x="461.8" y="212" font-size="12.5" fill="#000" textLength="14.5" lengthAdjust="spacingAndGlyphs" font-weight="bold" stroke="#000" stroke-width="0.35">U3</text><text x="491.8" y="206.7" font-size="12.5" fill="#000" textLength="13.7" lengthAdjust="spacingAndGlyphs" font-weight="bold" stroke="#000" stroke-width="0.35">U1</text><text x="376" y="222.5" font-size="12.5" fill="#000" textLength="14.7" lengthAdjust="spacingAndGlyphs" font-weight="bold" stroke="#000" stroke-width="0.35">U5</text><text x="387.8" y="256.4" font-size="12.5" fill="#000" textLength="15" lengthAdjust="spacingAndGlyphs" font-weight="bold" stroke="#000" stroke-width="0.35">U4</text><text x="368.8" y="274.6" font-size="12.5" fill="#000" textLength="12.7" lengthAdjust="spacingAndGlyphs" font-weight="bold" stroke="#000" stroke-width="0.35">h6</text><text x="385.9" y="276" font-size="12.5" fill="#000" textLength="13" lengthAdjust="spacingAndGlyphs" font-weight="bold" stroke="#000" stroke-width="0.35">h5</text><text x="461.8" y="275" font-size="12.5" fill="#000" textLength="13" lengthAdjust="spacingAndGlyphs" font-weight="bold" stroke="#000" stroke-width="0.35">h3</text><text x="478.6" y="272.4" font-size="12.5" fill="#000" textLength="13" lengthAdjust="spacingAndGlyphs" font-weight="bold" stroke="#000" stroke-width="0.35">h4</text><text x="494.6" y="272.4" font-size="12.5" fill="#000" textLength="14.7" lengthAdjust="spacingAndGlyphs" font-weight="bold" stroke="#000" stroke-width="0.35">U2</text><text x="421.3" y="298.6" font-size="12.5" fill="#000" textLength="6.2" lengthAdjust="spacingAndGlyphs" font-weight="bold" stroke="#000" stroke-width="0.35">b</text><text x="464" y="300.8" font-size="12.5" fill="#000" textLength="7.6" lengthAdjust="spacingAndGlyphs" font-weight="bold" stroke="#000" stroke-width="0.35">B</text><polyline points="418.3,206 418.3,201.3 429,201.3 429,206" fill="none" stroke="#000" stroke-width="1"/><polyline points="418.3,216.4 418.3,211 424,211 424,216.4" fill="none" stroke="#000" stroke-width="1"/><polyline points="476,215.5 462.4,215.5 462.4,223" fill="none" stroke="#000" stroke-width="1"/><polyline points="460,220 462.4,223 464.8,220" fill="none" stroke="#000" stroke-width="1"/><polyline points="505.5,210.5 491.8,210.5 491.8,217.7" fill="none" stroke="#000" stroke-width="1"/><polyline points="489.4,214.5 491.8,217.7 494.2,214.5" fill="none" stroke="#000" stroke-width="1"/><line x1="487.4" y1="217.7" x2="497.5" y2="217.7" stroke="#000" stroke-width="1"/><polyline points="376,226.4 390,226.4 390,234" fill="none" stroke="#000" stroke-width="1"/><polyline points="387.6,231 390,234 392.4,231" fill="none" stroke="#000" stroke-width="1"/><line x1="383.7" y1="234" x2="395.5" y2="234" stroke="#000" stroke-width="1"/><polyline points="387.8,260 401.6,260 401.6,267.5" fill="none" stroke="#000" stroke-width="1"/><polyline points="399.2,264.5 401.6,267.5 404,264.5" fill="none" stroke="#000" stroke-width="1"/><polyline points="509,275.7 496.8,275.7 496.8,283.8" fill="none" stroke="#000" stroke-width="1"/><polyline points="494.4,280.8 496.8,283.8 499.2,280.8" fill="none" stroke="#000" stroke-width="1"/><line x1="491.3" y1="283.8" x2="500.5" y2="283.8" stroke="#000" stroke-width="1"/><line x1="371.3" y1="276.8" x2="380.6" y2="276.8" stroke="#000" stroke-width="1"/><line x1="371.3" y1="283.7" x2="380.6" y2="283.7" stroke="#000" stroke-width="1" stroke-dasharray="3.5 2"/><line x1="371.8" y1="276.8" x2="371.8" y2="283.7" stroke="#000" stroke-width="1"/><line x1="386.3" y1="278.3" x2="395.5" y2="278.3" stroke="#000" stroke-width="1"/><line x1="386.3" y1="283.7" x2="395.5" y2="283.7" stroke="#000" stroke-width="1" stroke-dasharray="3.5 2"/><line x1="386.8" y1="278.3" x2="386.8" y2="283.7" stroke="#000" stroke-width="1"/><line x1="466.2" y1="279" x2="475.6" y2="279" stroke="#000" stroke-width="1"/><line x1="466.2" y1="283.7" x2="475.6" y2="283.7" stroke="#000" stroke-width="1" stroke-dasharray="3.5 2"/><line x1="475.1" y1="279" x2="475.1" y2="283.7" stroke="#000" stroke-width="1"/><line x1="479" y1="276.1" x2="488" y2="276.1" stroke="#000" stroke-width="1"/><line x1="479" y1="283.7" x2="488" y2="283.7" stroke="#000" stroke-width="1" stroke-dasharray="3.5 2"/><line x1="487.5" y1="276.1" x2="487.5" y2="283.7" stroke="#000" stroke-width="1"/><line x1="399.6" y1="295.4" x2="418.8" y2="295.4" stroke="#000" stroke-width="1"/><line x1="400" y1="290" x2="400" y2="304.3" stroke="#000" stroke-width="1" stroke-dasharray="5 1.5"/><line x1="418.5" y1="290.8" x2="418.5" y2="296.5" stroke="#000" stroke-width="1"/><line x1="399.6" y1="303.2" x2="460.8" y2="303.2" stroke="#000" stroke-width="1"/><line x1="460.4" y1="296.6" x2="460.4" y2="304.3" stroke="#000" stroke-width="1"/><text x="535" y="209" font-size="11" fill="#000" textLength="74.5" lengthAdjust="spacingAndGlyphs">Схема опирания</text><text x="552" y="226.4" font-size="11" fill="#000" textLength="55.3" lengthAdjust="spacingAndGlyphs">Консольная</text><text x="552" y="242.6" font-size="11" fill="#000" textLength="43.5" lengthAdjust="spacingAndGlyphs">Балочная</text><text x="535.5" y="271.7" font-size="11" fill="#000" textLength="123.5" lengthAdjust="spacingAndGlyphs">Режим работы программы</text><text x="552" y="289.9" font-size="11" fill="#000" textLength="77" lengthAdjust="spacingAndGlyphs">Проектирование</text><text x="552" y="305.2" font-size="11" fill="#000" textLength="45" lengthAdjust="spacingAndGlyphs">Проверка</text><text x="678.3" y="209" font-size="11" fill="#000" textLength="64.7" lengthAdjust="spacingAndGlyphs">Углы наклона</text><text x="678.3" y="223" font-size="11" fill="#000" textLength="72" lengthAdjust="spacingAndGlyphs">грунта засыпки</text><text x="679" y="243.3" font-size="11" fill="#000" textLength="41.5" lengthAdjust="spacingAndGlyphs">подошвы</text><text x="787.3" y="221.4" font-size="11" fill="#000">0</text><text x="787.3" y="243" font-size="11" fill="#000">0</text><text x="833.7" y="222.3" font-size="12" fill="#000" font-weight="bold" style="font-family:'Liberation Serif',serif">o</text><text x="833.7" y="244" font-size="12" fill="#000" font-weight="bold" style="font-family:'Liberation Serif',serif">o</text><text x="673.5" y="283.3" font-size="11" fill="#000" textLength="128.5" lengthAdjust="spacingAndGlyphs">Вылет передней консоли (b)</text><text x="675.5" y="304.5" font-size="11" fill="#000" textLength="93.5" lengthAdjust="spacingAndGlyphs">Ширина подошвы (B)</text><text x="811.4" y="282.2" font-size="11" fill="#000">0.6</text><text x="811.4" y="304.7" font-size="11" fill="#8a8a8a">3.6</text><text x="867" y="283.5" font-size="12" fill="#000" textLength="9" lengthAdjust="spacingAndGlyphs" font-weight="bold" style="font-family:'Liberation Serif',serif">м</text><text x="867" y="305.5" font-size="12" fill="#000" textLength="9" lengthAdjust="spacingAndGlyphs" font-weight="bold" style="font-family:'Liberation Serif',serif">м</text><text x="362.3" y="337.5" font-size="11" fill="#000" textLength="112.7" lengthAdjust="spacingAndGlyphs">Относительные отметки</text><text x="364.9" y="354.6" font-size="11" fill="#000" textLength="128.6" lengthAdjust="spacingAndGlyphs">верха подпорной стены (U1)</text><text x="563" y="354.6" font-size="11" fill="#000" textLength="13.8" lengthAdjust="spacingAndGlyphs">4.5</text><text x="618.6" y="355.1" font-size="12" fill="#000" textLength="8.3" lengthAdjust="spacingAndGlyphs" font-weight="bold" style="font-family:'Liberation Serif',serif">м</text><text x="364.9" y="376.90000000000003" font-size="11" fill="#000" textLength="62" lengthAdjust="spacingAndGlyphs">подошвы (U2)</text><text x="563" y="376.90000000000003" font-size="11" fill="#000" textLength="16.3" lengthAdjust="spacingAndGlyphs">-1.5</text><text x="618.6" y="377.40000000000003" font-size="12" fill="#000" textLength="8.3" lengthAdjust="spacingAndGlyphs" font-weight="bold" style="font-family:'Liberation Serif',serif">м</text><text x="364.9" y="398.90000000000003" font-size="11" fill="#000" textLength="147.5" lengthAdjust="spacingAndGlyphs">грунта со стороны засыпки (U3)</text><text x="563" y="398.90000000000003" font-size="11" fill="#000" textLength="13.8" lengthAdjust="spacingAndGlyphs">4.5</text><text x="618.6" y="399.40000000000003" font-size="12" fill="#000" textLength="8.3" lengthAdjust="spacingAndGlyphs" font-weight="bold" style="font-family:'Liberation Serif',serif">м</text><text x="364.9" y="420.90000000000003" font-size="11" fill="#000" textLength="140.5" lengthAdjust="spacingAndGlyphs">грунта с лицевой стороны (U4)</text><text x="563" y="420.90000000000003" font-size="11" fill="#000">0</text><text x="618.6" y="421.40000000000003" font-size="12" fill="#000" textLength="8.3" lengthAdjust="spacingAndGlyphs" font-weight="bold" style="font-family:'Liberation Serif',serif">м</text><text x="364.9" y="442.90000000000003" font-size="11" fill="#000" textLength="102.5" lengthAdjust="spacingAndGlyphs">шарнирной опоры (U5)</text><text x="563" y="442.90000000000003" font-size="11" fill="#8a8a8a">0</text><text x="618.6" y="443.40000000000003" font-size="12" fill="#000" textLength="8.3" lengthAdjust="spacingAndGlyphs" font-weight="bold" style="font-family:'Liberation Serif',serif">м</text><text x="662.6" y="338.6" font-size="11" fill="#000" textLength="157.5" lengthAdjust="spacingAndGlyphs">Высота сечений подпорной стены:</text><text x="662.6" y="354.6" font-size="11" fill="#000" textLength="90" lengthAdjust="spacingAndGlyphs">Лицевая панель, h1</text><text x="794.3" y="356.0" font-size="11" fill="#8a8a8a">0.16</text><text x="849.6" y="356.8" font-size="12" fill="#000" textLength="8.5" lengthAdjust="spacingAndGlyphs" font-weight="bold" style="font-family:'Liberation Serif',serif">м</text><text x="744" y="373.70000000000005" font-size="11" fill="#000" textLength="10.5" lengthAdjust="spacingAndGlyphs">h2</text><text x="794.3" y="375.1" font-size="11" fill="#8a8a8a">0.4</text><text x="849.6" y="375.90000000000003" font-size="12" fill="#000" textLength="8.5" lengthAdjust="spacingAndGlyphs" font-weight="bold" style="font-family:'Liberation Serif',serif">м</text><text x="665.2" y="392.8" font-size="11" fill="#000" textLength="89.3" lengthAdjust="spacingAndGlyphs">Задняя консоль, h3</text><text x="794.3" y="394.2" font-size="11" fill="#8a8a8a">0.2</text><text x="849.6" y="395.0" font-size="12" fill="#000" textLength="8.5" lengthAdjust="spacingAndGlyphs" font-weight="bold" style="font-family:'Liberation Serif',serif">м</text><text x="745.7" y="411.90000000000003" font-size="11" fill="#000" textLength="10.5" lengthAdjust="spacingAndGlyphs">h4</text><text x="794.3" y="413.3" font-size="11" fill="#8a8a8a">0.4</text><text x="849.6" y="414.1" font-size="12" fill="#000" textLength="8.5" lengthAdjust="spacingAndGlyphs" font-weight="bold" style="font-family:'Liberation Serif',serif">м</text><text x="664.6" y="431.0" font-size="11" fill="#000" textLength="101.7" lengthAdjust="spacingAndGlyphs">Передняя консоль, h5</text><text x="794.3" y="432.4" font-size="11" fill="#8a8a8a">0.24</text><text x="849.6" y="433.2" font-size="12" fill="#000" textLength="8.5" lengthAdjust="spacingAndGlyphs" font-weight="bold" style="font-family:'Liberation Serif',serif">м</text><text x="746.6" y="450.1" font-size="11" fill="#000" textLength="10.5" lengthAdjust="spacingAndGlyphs">h6</text><text x="794.3" y="451.5" font-size="11" fill="#8a8a8a">0.4</text><text x="849.6" y="452.3" font-size="12" fill="#000" textLength="8.5" lengthAdjust="spacingAndGlyphs" font-weight="bold" style="font-family:'Liberation Serif',serif">м</text><text x="520.5" y="492.3" font-size="11" fill="#000" textLength="14.5" lengthAdjust="spacingAndGlyphs">OK</text><text x="599" y="492.3" font-size="11" fill="#000" textLength="36" lengthAdjust="spacingAndGlyphs">Отмена</text><text x="686" y="492.3" font-size="11" fill="#000" textLength="40.5" lengthAdjust="spacingAndGlyphs">Справка</text><line x1="686" y1="494" x2="693" y2="494" stroke="#000" stroke-width="1"/></svg>
</div></body></html>
